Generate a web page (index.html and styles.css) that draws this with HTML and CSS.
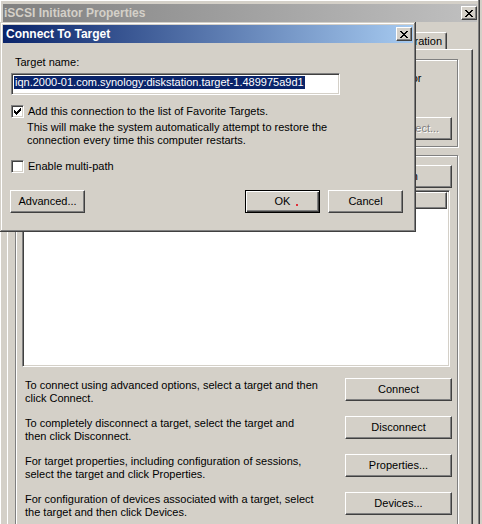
FILE: index.html
```html
<!DOCTYPE html>
<html>
<head>
<meta charset="utf-8">
<title>iSCSI Initiator Properties</title>
<link rel="stylesheet" href="styles.css">
</head>
<body>
<div class="win">
  <div class="titlebar">
    <span class="title-text">iSCSI Initiator Properties</span>
    <span class="capbtn"><svg width="8" height="7" viewBox="0 0 8 7" shape-rendering="crispEdges"><path d="M0 0h2v1h-2zM6 0h2v1h-2zM1 1h2v1h-2zM5 1h2v1h-2zM2 2h4v1h-4zM3 3h2v1h-2zM2 4h4v1h-4zM1 5h2v1h-2zM5 5h2v1h-2zM0 6h2v1h-2zM6 6h2v1h-2z" fill="#000"/></svg></span>
  </div>
  <div class="tabs">
    <span class="tab tab-sel">Targets</span>
    <span class="tab">Discovery</span>
    <span class="tab">Favorite Targets</span>
    <span class="tab">Volumes and Devices</span>
    <span class="tab">RADIUS</span>
    <span class="tab">Configuration</span>
  </div>
  <div class="panel">
    <div class="group group-quick">
      <span class="glabel">Quick Connect</span>
      <p class="gtext">To discover and log on to a target using a basic connection, type the IP address or<br>DNS name of the target and then click Quick Connect.</p>
      <div class="qrow">
        <span class="qlabel">Target:</span>
        <span class="qbox"></span>
        <span class="btn btn-wide btn-disabled">Quick Connect...</span>
      </div>
    </div>
    <div class="group group-targets">
      <span class="glabel">Discovered targets</span>
      <div class="refresh-row"><span class="btn btn-wide">Refresh</span></div>
      <div class="list">
        <div class="lhead"><span class="hcell hname">Name</span><span class="hcell hstatus">Status</span></div>
      </div>
      <div class="action">
        <p>To connect using advanced options, select a target and then<br>click Connect.</p>
        <span class="btn btn-wide">Connect</span>
      </div>
      <div class="action">
        <p>To completely disconnect a target, select the target and<br>then click Disconnect.</p>
        <span class="btn btn-wide">Disconnect</span>
      </div>
      <div class="action">
        <p>For target properties, including configuration of sessions,<br>select the target and click Properties.</p>
        <span class="btn btn-wide">Properties...</span>
      </div>
      <div class="action">
        <p>For configuration of devices associated with a target, select<br>the target and then click Devices.</p>
        <span class="btn btn-wide">Devices...</span>
      </div>
    </div>
  </div>
</div>

<div class="dlg">
  <div class="dlg-title">
    <span class="title-text">Connect To Target</span>
    <span class="capbtn"><svg width="8" height="7" viewBox="0 0 8 7" shape-rendering="crispEdges"><path d="M0 0h2v1h-2zM6 0h2v1h-2zM1 1h2v1h-2zM5 1h2v1h-2zM2 2h4v1h-4zM3 3h2v1h-2zM2 4h4v1h-4zM1 5h2v1h-2zM5 5h2v1h-2zM0 6h2v1h-2zM6 6h2v1h-2z" fill="#000"/></svg></span>
  </div>
  <div class="dlg-body">
    <span class="lbl">Target name:</span>
    <div class="textbox"><span class="sel">iqn.2000-01.com.synology:diskstation.target-1.489975a9d1</span></div>
    <div class="check-row check-fav">
      <span class="checkbox"><svg width="7" height="7" viewBox="0 0 7 7" shape-rendering="crispEdges"><path d="M6 0h1v3h-1zM5 1h1v3h-1zM4 2h1v3h-1zM3 3h1v3h-1zM2 4h1v3h-1zM1 3h1v3h-1zM0 2h1v3h-1z" fill="#000"/></svg></span>
      <span>Add this connection to the list of Favorite Targets.</span>
    </div>
    <p class="desc">This will make the system automatically attempt to restore the<br>connection every time this computer restarts.</p>
    <div class="check-row check-multi">
      <span class="checkbox"></span>
      <span>Enable multi-path</span>
    </div>
    <div class="dlg-buttons">
      <span class="btn btn-std">Advanced...</span>
      <span class="spacer"></span>
      <span class="btn btn-std btn-default">OK<i class="dot"></i></span>
      <span class="btn btn-std">Cancel</span>
    </div>
  </div>
</div>
</body>
</html>
```

FILE: styles.css
```css
* { box-sizing: border-box; }
html, body { margin: 0; padding: 0; }
body {
  width: 482px;
  height: 524px;
  overflow: hidden;
  position: relative;
  background: #d4d0c8;
  color: #000;
  font-family: "Liberation Sans", Arial, sans-serif;
  font-size: 11px;
  line-height: 13px;
}
p { margin: 0; }

/* background window */
.win {
  width: 480px;
  height: 540px;
  padding: 4px 2px 0 3px;
  background: #d4d0c8;
  border-right: 1px solid #404040;
  box-shadow: inset -1px 0 0 #808080, inset 1px 1px 0 #fff;
  display: flex;
  flex-direction: column;
}
.titlebar {
  height: 18px;
  flex: none;
  display: flex;
  align-items: center;
  padding: 0 0 0 1px;
  background: linear-gradient(to right, #808080, #c0c0c0);
  color: #d4d0c8;
  font-weight: bold;
  font-size: 12px;
}
.title-text { white-space: nowrap; }
.capbtn {
  margin-left: auto;
  width: 16px;
  height: 14px;
  flex: none;
  display: flex;
  align-items: center;
  justify-content: center;
  background: #d4d0c8;
  border-top: 1px solid #fff;
  border-left: 1px solid #fff;
  border-right: 1px solid #404040;
  border-bottom: 1px solid #404040;
  box-shadow: inset -1px -1px 0 #808080;
}
.capbtn svg { display: block; }

.tabs {
  height: 27px;
  flex: none;
  margin: 0 4px 0 4px;
  padding-right: 26px;
  display: flex;
  justify-content: flex-end;
  align-items: flex-end;
}
.tab {
  height: 17px;
  flex: none;
  padding: 2px 4px 0 4px;
  white-space: nowrap;
  border-top: 1px solid #fff;
  border-left: 1px solid #fff;
  border-right: 1px solid #404040;
  box-shadow: inset -1px 0 0 #808080;
  border-radius: 2px 2px 0 0;
}
.tab-sel { height: 19px; }

.panel {
  flex: 1;
  margin: 0 4px 0 4px;
  padding: 9px 14px 0 7px;
  border-top: 1px solid #fff;
  border-left: 1px solid #fff;
  border-right: 1px solid #404040;
  box-shadow: inset -1px 0 0 #808080;
  display: flex;
  flex-direction: column;
}
.group {
  border: 1px solid #808080;
  box-shadow: inset 1px 1px 0 #fff, 1px 1px 0 #fff;
  display: flex;
  flex-direction: column;
  padding: 0 5px 0 6px;
}
.group-quick { padding-bottom: 6px; }
.group-targets { margin-top: 8px; flex: 1; }
.glabel {
  align-self: flex-start;
  margin-top: -7px;
  padding: 0 2px;
  background: #d4d0c8;
  white-space: nowrap;
}
.gtext { margin-top: 6px; padding-left: 3px; white-space: nowrap; letter-spacing: -0.04px; }
.qrow {
  margin-top: 19px;
  display: flex;
  align-items: center;
  gap: 8px;
  padding-left: 3px;
}
.qbox {
  flex: 1;
  height: 21px;
  background: #fff;
  border-top: 1px solid #808080;
  border-left: 1px solid #808080;
  border-right: 1px solid #fff;
  border-bottom: 1px solid #fff;
  box-shadow: inset 1px 1px 0 #404040;
}
.refresh-row { margin-top: 3px; display: flex; justify-content: flex-end; }
.list {
  margin-top: 2px;
  margin-right: 2px;
  height: 177px;
  background: #fff;
  border-top: 1px solid #808080;
  border-left: 1px solid #808080;
  border-right: 1px solid #fff;
  border-bottom: 1px solid #fff;
  box-shadow: inset 1px 1px 0 #404040, inset -1px -1px 0 #d4d0c8;
  padding: 1px 1px 1px 1px;
}
.lhead { display: flex; height: 17px; margin-right: 1px; }
.hcell {
  display: flex;
  align-items: center;
  padding-left: 5px;
  background: #d4d0c8;
  border-top: 1px solid #fff;
  border-left: 1px solid #fff;
  border-right: 1px solid #404040;
  border-bottom: 1px solid #404040;
  box-shadow: inset -1px -1px 0 #808080;
}
.hname { width: 320px; }
.hstatus { flex: 1; }

.action {
  margin-top: 11px;
  display: flex;
  justify-content: space-between;
  align-items: flex-start;
}
.action p { padding-left: 3px; padding-top: 1px; white-space: nowrap; }

/* buttons */
.btn {
  display: flex;
  align-items: center;
  justify-content: center;
  height: 23px;
  flex: none;
  background: #d4d0c8;
  border-top: 1px solid #fff;
  border-left: 1px solid #fff;
  border-right: 1px solid #404040;
  border-bottom: 1px solid #404040;
  box-shadow: inset -1px -1px 0 #808080;
  white-space: nowrap;
  position: relative;
}
.btn-wide { width: 107px; }
.btn-std { width: 75px; }
.btn-disabled { color: #808080; text-shadow: 1px 1px 0 #fff; }
.btn-default {
  border: 1px solid #000;
  box-shadow: inset 1px 1px 0 #fff, inset -1px -1px 0 #404040, inset -2px -2px 0 #808080;
}
.dot {
  position: absolute;
  left: 50px;
  top: 13px;
  width: 2px;
  height: 2px;
  background: #e0303a;
}

/* front dialog */
.dlg {
  position: absolute;
  left: 0;
  top: 22px;
  width: 416px;
  height: 210px;
  padding: 3px;
  background: #d4d0c8;
  box-shadow: inset -1px -1px 0 #404040, inset 1px 1px 0 #d4d0c8, inset -2px -2px 0 #808080, inset 2px 2px 0 #fff;
  display: flex;
  flex-direction: column;
}
.dlg-title {
  height: 18px;
  flex: none;
  display: flex;
  align-items: center;
  padding: 0 1px 0 3px;
  background: linear-gradient(to right, #0a246a, #a6caf0);
  color: #fff;
  font-weight: bold;
  font-size: 12px;
}
.dlg-body {
  display: flex;
  flex-direction: column;
  padding: 0 10px 0 8px;
}
.lbl { margin-top: 13px; padding-left: 4px; }
.textbox {
  margin-top: 4px;
  width: 329px;
  height: 22px;
  padding: 1px 1px 0 1px;
  background: #fff;
  border-top: 1px solid #808080;
  border-left: 1px solid #808080;
  border-right: 1px solid #fff;
  border-bottom: 1px solid #fff;
  box-shadow: inset 1px 1px 0 #404040, inset -1px -1px 0 #d4d0c8;
  white-space: nowrap;
  overflow: hidden;
}
.sel {
  display: inline-block;
  margin: 1px 0 0 1px;
  padding: 0 1px;
  background: #0a246a;
  color: #fff;
  line-height: 13px;
}
.check-row { display: flex; align-items: center; gap: 4px; white-space: nowrap; }
.check-fav { margin-top: 10px; }
.check-multi { margin-top: 13px; }
.checkbox {
  width: 13px;
  height: 13px;
  flex: none;
  display: flex;
  align-items: center;
  justify-content: center;
  background: #fff;
  border-top: 1px solid #808080;
  border-left: 1px solid #808080;
  border-right: 1px solid #fff;
  border-bottom: 1px solid #fff;
  box-shadow: inset 1px 1px 0 #404040, inset -1px -1px 0 #d4d0c8;
}
.checkbox svg { display: block; }
.desc { margin-top: 3px; padding-left: 16px; white-space: nowrap; }
.dlg-buttons {
  margin-top: 17px;
  display: flex;
  gap: 8px;
  padding-left: 0;
  margin-left: -1px;
}
.spacer { flex: 1; }
```
